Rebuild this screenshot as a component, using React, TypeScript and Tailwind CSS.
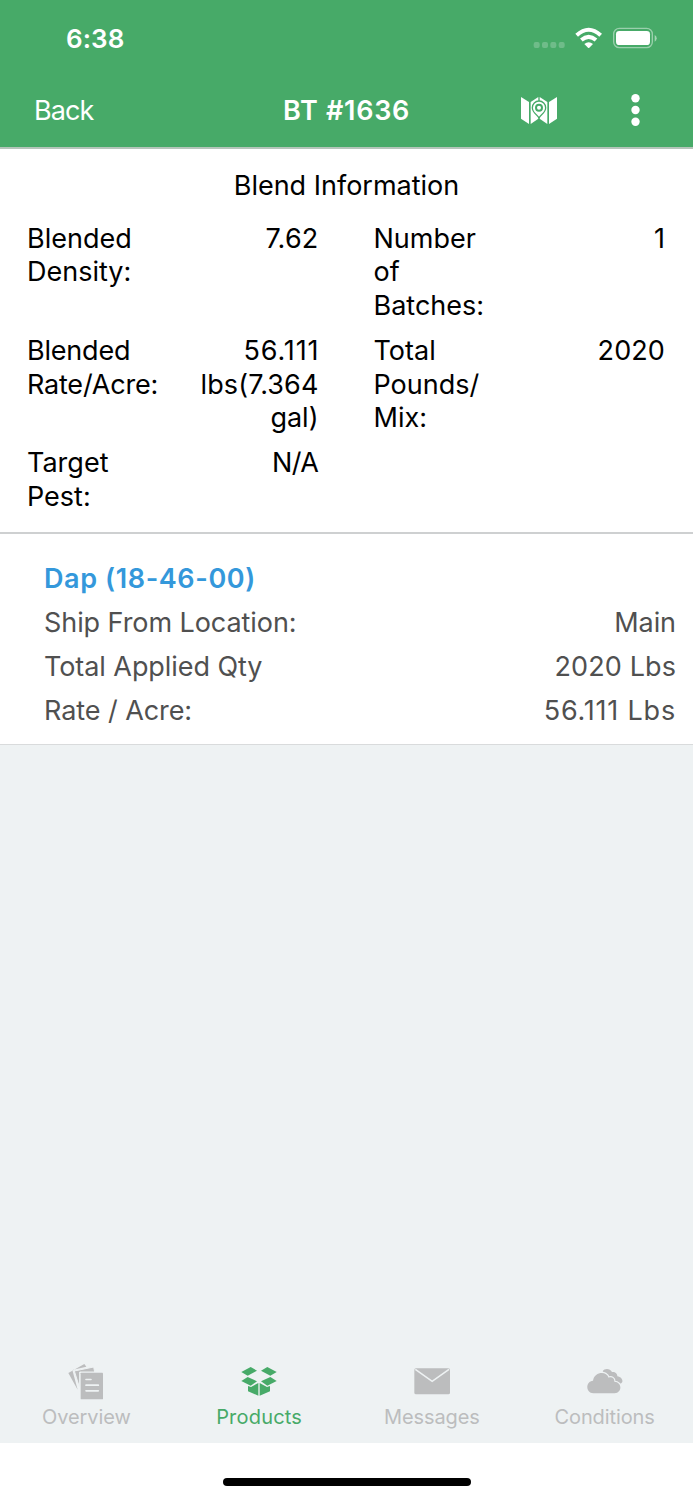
import { clsx } from "clsx"
import type { ReactNode } from "react"

function StatusIcons() {
	return (
		<svg className="h-[22px] w-[124px]" viewBox="100 80 372 66" fill="white">
			<g opacity="0.22">
				<rect x="102" y="125" width="18" height="18" rx="6" />
				<rect x="127" y="125" width="18" height="18" rx="6" />
				<rect x="152" y="125" width="18" height="18" rx="6" />
				<rect x="177" y="125" width="18" height="18" rx="6" />
			</g>
			<g fill="none" stroke="white" strokeWidth="12">
				<path d="M231 104.500Q267 72 303 104.500" />
				<path d="M245 119Q267 100 289 119" />
			</g>
			<path d="M254 131Q267 120 280 131L269 142Q267 144 265 142Z" />
			<rect x="342" y="84" width="116" height="58" rx="17" fill="none" stroke="white" strokeWidth="4" opacity="0.45" />
			<rect x="349" y="92" width="102" height="42" rx="10" />
			<path d="M465 104Q471 107 471 114Q471 121 465 124Z" opacity="0.5" />
		</svg>
	)
}

function MapIcon() {
	return (
		<svg className="h-[29px] w-[38px]" viewBox="60 288 114 87" fill="white">
			<path d="M63 291L87 306V372L63 356Z" />
			<path d="M92 306L115 291V356L92 372Z" />
			<path d="M119 291L142 306V372L119 356Z" />
			<path d="M147 306L171 291V356L147 372Z" />
			<path
				d="M117 350C111 342 99 335 99 323A18 18 0 0 1 135 323C135 335 123 342 117 350Z"
				stroke="#47aa68"
				strokeWidth="8"
				paintOrder="stroke"
			/>
			<circle cx="117" cy="323" r="9" fill="white" stroke="#47aa68" strokeWidth="6" />
		</svg>
	)
}

function MoreIcon() {
	return (
		<svg className="h-8 w-[9px]" viewBox="0 0 9 32" fill="white">
			<circle cx="4.500" cy="4.300" r="4.200" />
			<circle cx="4.500" cy="16" r="4.200" />
			<circle cx="4.500" cy="27.700" r="4.200" />
		</svg>
	)
}

function OverviewIcon() {
	return (
		<svg className="h-[37px] w-9" viewBox="54 41 108 111" fill="currentColor">
			<path d="M55 71L103 44L109 52L70 61L68 66L83 121Z" />
			<path d="M73 65L131 53L134 68H89V116Z" stroke="#eef2f3" strokeWidth="3" />
			<rect x="92" y="70" width="67" height="80" rx="2" stroke="#eef2f3" strokeWidth="4" paintOrder="stroke" />
			<path d="M108 90.500H123M108 107.500H145M108 124.500H145" stroke="#eef2f3" strokeWidth="5" strokeLinecap="round" />
		</svg>
	)
}

function ProductsIcon() {
	return (
		<svg className="h-[37px] w-9" viewBox="62 41 108 111" fill="currentColor">
			<path d="M63 68L91 53L110 64L82 79Z" />
			<path d="M169 68L141 53L122 64L150 79Z" />
			<path d="M63 95L82 83L110 96L91 109Z" />
			<path d="M169 95L150 83L122 96L141 109Z" />
			<path d="M83 110L92 113L114 101V139L83 126Z" />
			<path d="M149 110L140 113L118 101V139L149 126Z" />
		</svg>
	)
}

function MessagesIcon() {
	return (
		<svg className="h-[37px] w-9" viewBox="71 41 108 111" fill="currentColor">
			<rect x="72" y="57" width="107" height="78" rx="5" />
			<path d="M75 60L125.500 96L176 60" fill="none" stroke="#eef2f3" strokeWidth="5" />
		</svg>
	)
}

function ConditionsIcon() {
	return (
		<svg className="h-[37px] w-9" viewBox="81 41 108 111" fill="currentColor">
			<path d="M128 66C133 56 150 56 156 68C164 66 173 73 172 81C182 82 189 91 187 98Q185 103 178 104L150 90Z" />
			<path
				d="M100 132C76 131 76 96 99 94C103 66 140 64 146 85C155 81 164 87 163 97C187 98 187 131 164 132Z"
				stroke="#eef2f3"
				strokeWidth="7"
				paintOrder="stroke"
			/>
		</svg>
	)
}

interface BlendFieldProps {
	label: string
	value: string
	valueClassName?: string
}

function BlendField({ label, value, valueClassName }: BlendFieldProps) {
	return (
		<div className="flex justify-between pr-7 pl-[27px]">
			<span className="whitespace-pre-line">{label}</span>
			<span className={clsx("text-right whitespace-pre-line", valueClassName)}>{value}</span>
		</div>
	)
}

interface ProductRowProps {
	label: string
	value: string
	valueClassName?: string
}

function ProductRow({ label, value, valueClassName }: ProductRowProps) {
	return (
		<div className="flex justify-between">
			<span>{label}</span>
			<span className={valueClassName}>{value}</span>
		</div>
	)
}

function TabItem({ title, active, children }: { title: string; active?: boolean; children: ReactNode }) {
	return (
		<button className={clsx("flex flex-col items-center", active ? "text-[#47aa68]" : "text-[#bcbdbe]")}>
			{children}
			<span className={clsx("mt-[3px] text-[20px] leading-7", active ? "tracking-[0.2px]" : "tracking-[-0.1px]")}>
				{title}
			</span>
		</button>
	)
}

export default function App() {
	return (
		<div className="flex h-[1500px] w-[693px] flex-col overflow-hidden bg-[#eef2f3] font-['Inter',sans-serif] text-[27px] text-black">
			<header className="h-[149px] shrink-0 border-b-2 border-[#b5c5ba] bg-[#47aa68] text-white">
				<div className="flex h-[75px] items-center justify-between pr-9 pl-[66px]">
					<span className="pt-0.5 text-[26px] font-semibold tracking-[0.1px]">6:38</span>
					<StatusIcons />
				</div>
				<div className="grid h-[70px] grid-cols-3 items-center pr-[53px] pl-[34px]">
					<span className="pt-[3px] tracking-[-0.9px]">Back</span>
					<h1 className="pt-[3px] pl-[47px] font-semibold whitespace-nowrap tracking-[0.7px]">BT #1636</h1>
					<div className="flex items-center justify-end gap-[73px]">
						<MapIcon />
						<MoreIcon />
					</div>
				</div>
			</header>

			<section className="h-[385px] shrink-0 border-b-2 border-[#ced0d1] bg-white pt-5 leading-[33.700px]">
				<h2 className="text-center">Blend Information</h2>
				<div className="mt-[19px] grid grid-cols-2 gap-y-[11px]">
					<BlendField label={"Blended\nDensity:"} value="7.62" valueClassName="tracking-[0.2px]" />
					<BlendField label={"Number\nof\nBatches:"} value="1" />
					<div className="flex justify-between pr-7 pl-[27px]">
						<span className="tracking-[-0.2px]">
							Blended
							<br />
							Rate/Acre:
						</span>
						<span className="text-right">
							<span className="-mr-px tracking-[0.9px]">56.111</span>
							<br />
							<span className="tracking-[0.1px]">lbs(7.364</span>
							<br />
							gal)
						</span>
					</div>
					<BlendField label={"Total\nPounds/\nMix:"} value="2020" valueClassName="tracking-[0.1px]" />
					<BlendField label={"Target\nPest:"} value="N/A" valueClassName="tracking-[-0.5px]" />
				</div>
			</section>

			<section className="h-[211px] shrink-0 border-b border-[#d9dbdc] bg-white pt-[23px] pr-[17px] pl-11 leading-[44px] tracking-[-0.07px] text-[#505050]">
				<h3 className="font-semibold tracking-[0.6px] text-[#3498db]">Dap (18-46-00)</h3>
				<ProductRow label="Ship From Location:" value="Main" />
				<ProductRow label="Total Applied Qty" value="2020 Lbs" valueClassName="tracking-[0.1px]" />
				<ProductRow label="Rate / Acre:" value="56.111 Lbs" valueClassName="tracking-[0.8px]" />
			</section>

			<nav className="mt-auto mr-0.5 grid h-[80px] shrink-0 grid-cols-4">
				<TabItem title="Overview">
					<OverviewIcon />
				</TabItem>
				<TabItem title="Products" active>
					<ProductsIcon />
				</TabItem>
				<TabItem title="Messages">
					<MessagesIcon />
				</TabItem>
				<TabItem title="Conditions">
					<ConditionsIcon />
				</TabItem>
			</nav>
			<footer className="flex h-[57px] shrink-0 justify-center bg-white pt-[35px]">
				<div className="h-2 w-[248px] rounded-full bg-black" />
			</footer>
		</div>
	)
}
